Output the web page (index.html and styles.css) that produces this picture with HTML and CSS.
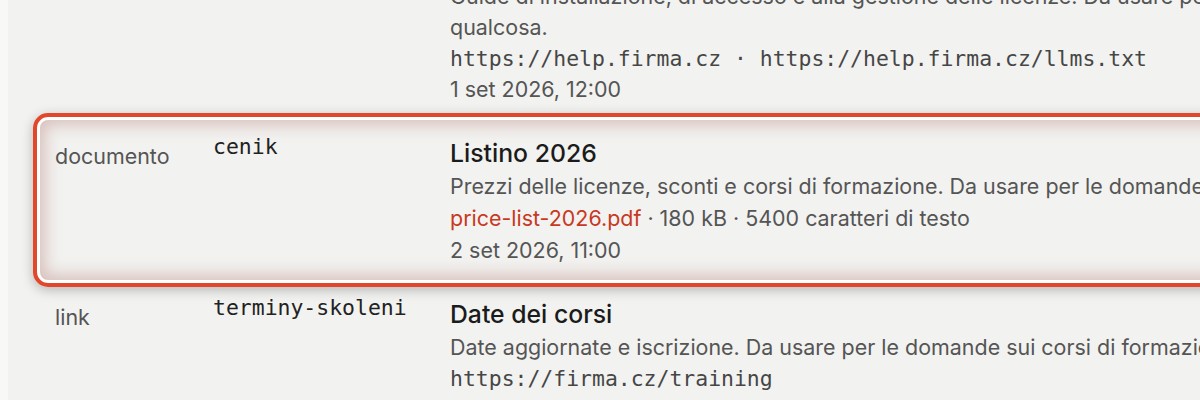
FILE: index.html
```html
<!DOCTYPE html>
<html lang="it">
<head>
<meta charset="utf-8">
<title>Fonti</title>
<link rel="stylesheet" href="styles.css">
</head>
<body>
<div class="page">
  <div class="list">
    <div class="row compact">
      <div class="type">sito</div>
      <div class="key">help</div>
      <div class="content">
        <div class="title">Centro assistenza</div>
        <div class="desc">Guide di installazione, di accesso e alla gestione delle licenze. Da usare per le domande su come fare qualcosa.</div>
        <div class="mono">https://help.firma.cz · https://help.firma.cz/llms.txt</div>
        <div class="date">1 set 2026, 12:00</div>
      </div>
    </div>
    <div class="row hl">
      <div class="type">documento</div>
      <div class="key">cenik</div>
      <div class="content">
        <div class="title">Listino 2026</div>
        <div class="desc">Prezzi delle licenze, sconti e corsi di formazione. Da usare per le domande sui prezzi.</div>
        <div class="meta"><span class="file">price-list-2026.pdf</span> · 180 kB · 5400 caratteri di testo</div>
        <div class="date">2 set 2026, 11:00</div>
      </div>
    </div>
    <div class="row">
      <div class="type">link</div>
      <div class="key">terminy-skoleni</div>
      <div class="content">
        <div class="title">Date dei corsi</div>
        <div class="desc">Date aggiornate e iscrizione. Da usare per le domande sui corsi di formazione.</div>
        <div class="mono">https://firma.cz/training</div>
        <div class="date">3 set 2026, 09:00</div>
      </div>
    </div>
  </div>
</div>
</body>
</html>
```
FILE: styles.css
```css
html, body {
  margin: 0;
  padding: 0;
  background: #f8f8f7;
  overflow: hidden;
}
body {
  font-family: Inter, "Noto Sans", sans-serif;
  font-size: 21.45px;
  line-height: 32px;
  color: #555;
}
.page {
  margin-left: 8px;
  background: #f2f2f0;
  height: 400px;
  padding-left: 25px;
  overflow: hidden;
}
.list {
  margin-top: -63px;
  width: 1500px;
}
.row {
  display: grid;
  grid-template-columns: 158px 237px 1060px;
  padding: 7px 0 4px 18px;
  border: 4px solid transparent;
  border-radius: 15px;
}
.row.compact .content {
  line-height: 31px;
}
.row.hl {
  border: 4px solid #e0472b;
  padding: 20px 0 17px 18px;
  box-shadow:
    inset 0 0 0 3px #ffffff,
    inset 0 0 16px 8px rgba(178, 125, 115, 0.42),
    0 3px 12px rgba(0, 0, 0, 0.25);
}
.type {
  color: #555;
  padding-top: 3px;
}
.key {
  font-family: "DejaVu Sans Mono", monospace;
  font-size: 21.45px;
  line-height: 19px;
  color: #222;
}
.content {
  min-width: 0;
}
.title {
  font-size: 24.75px;
  line-height: 33px;
  font-weight: 500;
  color: #1b1b1b;
}
.desc, .meta, .date {
  color: #555;
}
.mono {
  font-family: "DejaVu Sans Mono", monospace;
  font-size: 21.45px;
  color: #464646;
}
.file {
  color: #c8391f;
}
```
